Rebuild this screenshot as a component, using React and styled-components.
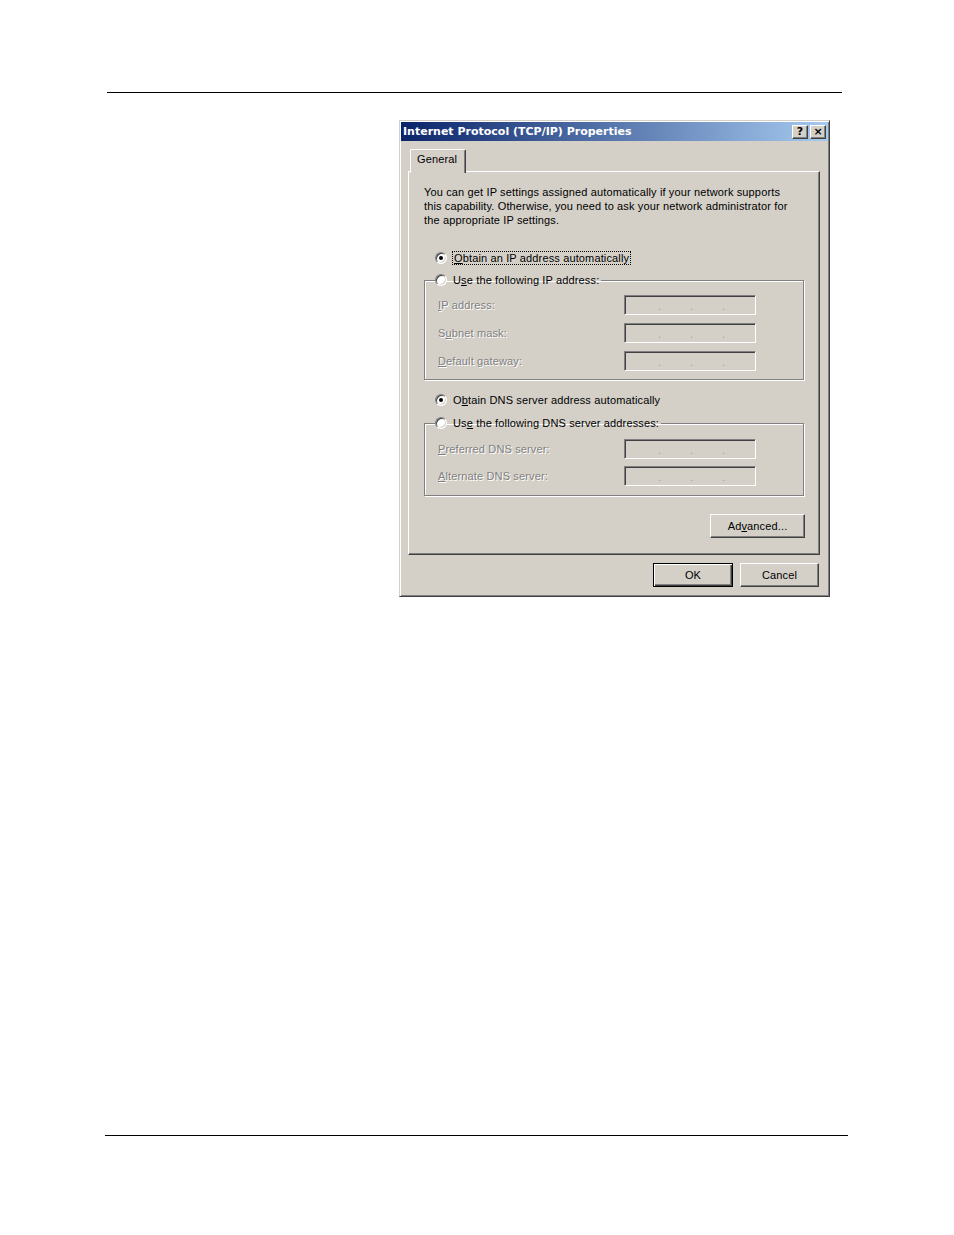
import React from "react";
import styled, { createGlobalStyle } from "styled-components";

const GlobalStyle = createGlobalStyle`
  html, body {
    margin: 0;
    padding: 0;
    background: #ffffff;
  }
  body {
    font-family: "Liberation Sans", Arial, sans-serif;
  }
`;

const Page = styled.div`
  width: 954px;
  height: 1235px;
  display: flex;
  flex-direction: column;
  overflow: hidden;
`;

const Rule = styled.div`
  height: 1px;
  background: #000;
  margin-left: ${(p) => p.$left}px;
  width: ${(p) => p.$width}px;
  margin-top: ${(p) => p.$top}px;
`;

const Stage = styled.div`
  padding-left: 399px;
  margin-top: 27px;
`;

const Dialog = styled.div`
  box-sizing: border-box;
  width: 431px;
  background: #d4d0c8;
  border: 1px solid;
  border-color: #d4d0c8 #404040 #404040 #d4d0c8;
  box-shadow: inset 1px 1px 0 #fff, inset -1px -1px 0 #808080;
  padding: 1px;
  font-size: 11px;
  letter-spacing: 0.14px;
  color: #000;
`;

const TitleBar = styled.div`
  height: 19px;
  display: flex;
  align-items: center;
  justify-content: space-between;
  padding: 0 2px;
  background: linear-gradient(to right, #0a246a, #a6caf0);
`;

const TitleText = styled.span`
  font-family: "DejaVu Sans", Verdana, sans-serif;
  font-weight: bold;
  font-size: 11px;
  color: #fff;
  letter-spacing: 0;
`;

const TitleButtons = styled.div`
  display: flex;
  gap: 2px;
`;

const CapButton = styled.span`
  box-sizing: border-box;
  width: 16px;
  height: 14px;
  display: flex;
  align-items: center;
  justify-content: center;
  background: #d4d0c8;
  border: 1px solid;
  border-color: #fff #404040 #404040 #fff;
  box-shadow: inset -1px -1px 0 #808080;
  font-family: "DejaVu Sans", sans-serif;
  font-weight: bold;
  font-size: 11px;
  line-height: 1;
  letter-spacing: 0;
  color: #000;
`;

const Body = styled.div`
  padding: 8px 8px 8px 7px;
`;

const TabStrip = styled.div`
  display: flex;
  padding-left: 2px;
  position: relative;
  z-index: 1;
  margin-bottom: -2px;
`;

const Tab = styled.div`
  box-sizing: border-box;
  width: 56px;
  height: 24px;
  background: #d4d0c8;
  border-top: 1px solid #fff;
  border-left: 1px solid #fff;
  border-right: 1px solid #404040;
  box-shadow: inset -1px 0 0 #808080;
  border-radius: 2px 2px 0 0;
  padding: 3px 0 0 6px;
  font-size: 11px;
`;

const Panel = styled.div`
  box-sizing: border-box;
  height: 384px;
  border: 1px solid;
  border-color: #fff #404040 #404040 #fff;
  box-shadow: inset -1px -1px 0 #808080;
  padding: 13px 15px 14px 15px;
  display: flex;
  flex-direction: column;
`;

const Intro = styled.p`
  margin: 0;
  line-height: 14px;
  font-size: 11px;
`;

const RadioRow = styled.label`
  display: flex;
  align-items: center;
  gap: 6px;
  height: 16px;
  padding-left: ${(p) => p.$indent ?? 11}px;
  margin-top: ${(p) => p.$top ?? 0}px;
  font-size: 11px;
  white-space: nowrap;
`;

const Radio = styled.span`
  box-sizing: border-box;
  width: 12px;
  height: 12px;
  border-radius: 50%;
  background: #fff;
  border: 1px solid;
  border-color: #808080 #fff #fff #808080;
  box-shadow: inset 1px 1px 0 #404040, inset -1px -1px 0 #d4d0c8;
  display: flex;
  align-items: center;
  justify-content: center;
  flex: none;

  &::after {
    content: "";
    width: 4px;
    height: 4px;
    border-radius: 50%;
    background: ${(p) => (p.$on ? "#000" : "transparent")};
  }
`;

const Focus = styled.span`
  outline: 1px dotted #000;
  outline-offset: 0;
  padding: 0 1px;
`;

const Key = styled.span`
  text-decoration: underline;
  text-underline-offset: 1px;
`;

const Group = styled.fieldset`
  margin: ${(p) => p.$top}px 0 0 0;
  padding: ${(p) => p.$pt}px 0 ${(p) => p.$pb}px 13px;
  border: 1px solid #808080;
  box-shadow: 1px 1px 0 #fff, inset 1px 1px 0 #fff;
  min-width: 0;
  display: flex;
  flex-direction: column;
  gap: ${(p) => p.$gap}px;
`;

const Legend = styled.legend`
  padding: 0 2px 0 0;
  margin-left: -3px;
  line-height: 16px;
`;

const FieldRow = styled.div`
  display: flex;
  align-items: center;
  height: 20px;
`;

const FieldLabel = styled.span`
  width: 186px;
  color: #808080;
  text-shadow: 1px 1px 0 #fff;
  font-size: 11px;
`;

const IpBox = styled.div`
  box-sizing: border-box;
  width: 132px;
  height: 20px;
  background: #d4d0c8;
  border: 1px solid;
  border-color: #808080 #fff #fff #808080;
  box-shadow: inset 1px 1px 0 #404040, inset -1px -1px 0 #d4d0c8;
  display: flex;
  align-items: center;
  padding-left: 33px;
  gap: 30px;
`;

const Dot = styled.span`
  width: 2px;
  color: #a0a0a0;
  font-size: 11px;
  line-height: 1;
  margin-top: 2px;
`;

const WinButton = styled.button`
  box-sizing: border-box;
  width: ${(p) => p.$w}px;
  height: 24px;
  background: #d4d0c8;
  font-family: "Liberation Sans", Arial, sans-serif;
  font-size: 11px;
  letter-spacing: 0.14px;
  color: #000;
  padding: 0;
  border: 1px solid;
  border-color: ${(p) => (p.$default ? "#000" : "#fff #404040 #404040 #fff")};
  box-shadow: ${(p) =>
    p.$default
      ? "inset 1px 1px 0 #fff, inset -1px -1px 0 #404040, inset -2px -2px 0 #808080"
      : "inset -1px -1px 0 #808080"};
`;

const AdvancedRow = styled.div`
  display: flex;
  justify-content: flex-end;
  margin-top: 18px;
  margin-right: -1px;
`;

const Footer = styled.div`
  display: flex;
  justify-content: flex-end;
  gap: 7px;
  margin-top: 8px;
  padding-right: 1px;
`;

const IpField = ({ label, k }) => {
  const i = label.indexOf(k);
  return (
    <FieldRow>
      <FieldLabel>
        {label.slice(0, i)}
        <Key>{k}</Key>
        {label.slice(i + 1)}
      </FieldLabel>
      <IpBox>
        <Dot>.</Dot>
        <Dot>.</Dot>
        <Dot>.</Dot>
      </IpBox>
    </FieldRow>
  );
};

const App = () => {
  return (
    <Page>
      <GlobalStyle />
      <Rule $left={107} $width={735} $top={92} />
      <Stage>
        <Dialog>
          <TitleBar>
            <TitleText>Internet Protocol (TCP/IP) Properties</TitleText>
            <TitleButtons>
              <CapButton>?</CapButton>
              <CapButton>×</CapButton>
            </TitleButtons>
          </TitleBar>
          <Body>
            <TabStrip>
              <Tab>General</Tab>
            </TabStrip>
            <Panel>
              <Intro>
                You can get IP settings assigned automatically if your network supports
                <br />
                this capability. Otherwise, you need to ask your network administrator for
                <br />
                the appropriate IP settings.
              </Intro>
              <RadioRow $top={23}>
                <Radio $on />
                <Focus>
                  <Key>O</Key>btain an IP address automatically
                </Focus>
              </RadioRow>
              <Group $top={6} $pt={7} $pb={8} $gap={8}>
                <Legend>
                  <RadioRow $indent={0}>
                    <Radio />
                    <span>
                      U<Key>s</Key>e the following IP address:
                    </span>
                  </RadioRow>
                </Legend>
                <IpField label="IP address:" k="I" />
                <IpField label="Subnet mask:" k="u" />
                <IpField label="Default gateway:" k="D" />
              </Group>
              <RadioRow $top={12}>
                <Radio $on />
                <span>
                  O<Key>b</Key>tain DNS server address automatically
                </span>
              </RadioRow>
              <Group $top={7} $pt={8} $pb={9} $gap={7}>
                <Legend>
                  <RadioRow $indent={0}>
                    <Radio />
                    <span>
                      Us<Key>e</Key> the following DNS server addresses:
                    </span>
                  </RadioRow>
                </Legend>
                <IpField label="Preferred DNS server:" k="P" />
                <IpField label="Alternate DNS server:" k="A" />
              </Group>
              <AdvancedRow>
                <WinButton $w={95}>
                  Ad<Key>v</Key>anced...
                </WinButton>
              </AdvancedRow>
            </Panel>
            <Footer>
              <WinButton $w={80} $default>
                OK
              </WinButton>
              <WinButton $w={79}>Cancel</WinButton>
            </Footer>
          </Body>
        </Dialog>
      </Stage>
      <Rule $left={105} $width={743} $top={538} />
    </Page>
  );
};

export default App;
